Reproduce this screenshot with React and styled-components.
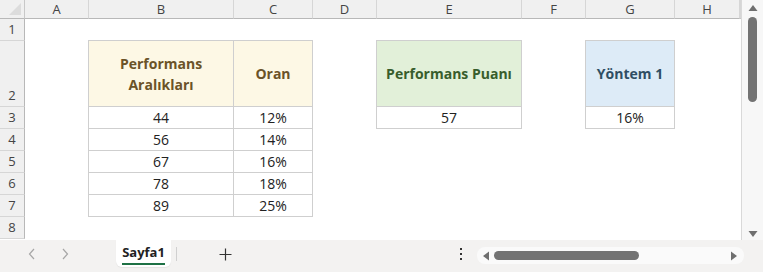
import React from 'react';
import styled, { createGlobalStyle } from 'styled-components';

const GlobalStyle = createGlobalStyle`
    html, body {
        margin: 0;
        padding: 0;
        background: #ffffff;
    }
    body {
        font-family: "Open Sans", "Liberation Sans", sans-serif;
    }
`;

const COLS = ['A', 'B', 'C', 'D', 'E', 'F', 'G', 'H'];
const ROW_HEIGHTS = [22, 66, 22, 22, 22, 22, 22, 22];

const tones = {
    cream: { bg: '#fdf8e5', color: '#6b5328' },
    green: { bg: '#e2f0d9', color: '#385d2c' },
    blue: { bg: '#ddebf7', color: '#2f4e63' },
};

// cells keyed by "col+row" (e.g. B2)
const cells = {
    B2: { text: 'Performans Aralıkları', tone: 'cream', wrap: true },
    C2: { text: 'Oran', tone: 'cream' },
    E2: { text: 'Performans Puanı', tone: 'green' },
    G2: { text: 'Yöntem 1', tone: 'blue' },
    B3: { text: '44' }, C3: { text: '12%' },
    B4: { text: '56' }, C4: { text: '14%' },
    B5: { text: '67' }, C5: { text: '16%' },
    B6: { text: '78' }, C6: { text: '18%' },
    B7: { text: '89' }, C7: { text: '25%' },
    E3: { text: '57' },
    G3: { text: '16%' },
};

const inTable = (col, row) => Boolean(cells[`${col}${row}`]);

export default function App() {
    return (
        <>
            <GlobalStyle />
            <Window>
                <Main>
                    <Sheet>
                        <Corner />
                        {COLS.map((c) => (
                            <ColHeader key={c}>{c}</ColHeader>
                        ))}
                        <ColHeader />
                        {ROW_HEIGHTS.map((h, i) => {
                            const row = i + 1;
                            return (
                                <React.Fragment key={row}>
                                    <RowHeader>{row}</RowHeader>
                                    {COLS.map((col, ci) => {
                                        const cell = cells[`${col}${row}`];
                                        if (!cell) return <Cell key={col} />;
                                        const tone = cell.tone ? tones[cell.tone] : null;
                                        return (
                                            <Cell
                                                key={col}
                                                $bordered
                                                $top={!inTable(col, row - 1)}
                                                $left={ci === 0 || !inTable(COLS[ci - 1], row)}
                                                $bg={tone ? tone.bg : '#ffffff'}
                                                $color={tone ? tone.color : '#222222'}
                                                $bold={Boolean(tone)}
                                            >
                                                {cell.wrap ? (
                                                    <span>Performans<br />Aralıkları</span>
                                                ) : (
                                                    cell.text
                                                )}
                                            </Cell>
                                        );
                                    })}
                                    <Cell />
                                </React.Fragment>
                            );
                        })}
                    </Sheet>
                    <VScroll>
                        <Arrow viewBox="0 0 10 8" width="10" height="8">
                            <path d="M5 1 L9.5 7 L0.5 7 Z" fill="#6f6f6f" />
                        </Arrow>
                        <VThumb />
                        <Spacer />
                        <Arrow viewBox="0 0 10 8" width="10" height="8">
                            <path d="M0.5 1 L9.5 1 L5 7 Z" fill="#6f6f6f" />
                        </Arrow>
                    </VScroll>
                </Main>
                <TabBar>
                    <NavButton>
                        <svg width="8" height="12" viewBox="0 0 8 12">
                            <path d="M6 1 L1.5 6 L6 11" fill="none" stroke="#a6a6a6" strokeWidth="1.2" />
                        </svg>
                    </NavButton>
                    <NavButton>
                        <svg width="8" height="12" viewBox="0 0 8 12">
                            <path d="M2 1 L6.5 6 L2 11" fill="none" stroke="#a6a6a6" strokeWidth="1.2" />
                        </svg>
                    </NavButton>
                    <Tab>
                        <TabLabel>Sayfa1</TabLabel>
                    </Tab>
                    <TabDivider />
                    <AddButton>
                        <svg width="13" height="13" viewBox="0 0 13 13">
                            <path d="M6.5 0.5 V12.5 M0.5 6.5 H12.5" stroke="#333" strokeWidth="1.2" />
                        </svg>
                    </AddButton>
                    <Grow />
                    <MoreDots>
                        <i /><i /><i />
                    </MoreDots>
                    <HScroll>
                        <svg width="8" height="10" viewBox="0 0 8 10">
                            <path d="M7 0.5 V9.5 L1 5 Z" fill="#6f6f6f" />
                        </svg>
                        <HThumb />
                        <Grow />
                        <svg width="8" height="10" viewBox="0 0 8 10">
                            <path d="M1 0.5 V9.5 L7 5 Z" fill="#6f6f6f" />
                        </svg>
                    </HScroll>
                </TabBar>
            </Window>
        </>
    );
}

const Window = styled.div`
    width: 763px;
    height: 272px;
    display: flex;
    flex-direction: column;
    overflow: hidden;
    background: #ffffff;
`;

const Main = styled.div`
    display: flex;
    height: 240px;
`;

const Sheet = styled.div`
    flex: 1;
    display: grid;
    grid-template-columns: 25px 64px 145px 79px 64px 145px 64px 89px 65px 1fr;
    grid-template-rows: 19px ${ROW_HEIGHTS.map((h) => `${h}px`).join(' ')};
    border-right: 1px solid #d9d9d9;
    align-content: start;
`;

const Corner = styled.div`
    background: #f0f0f0;
    border-right: 1px solid #c8c8c8;
    border-bottom: 1px solid #b8b8b8;
    position: relative;
    &::after {
        content: '';
        position: absolute;
        right: 3px;
        bottom: 3px;
        border-style: solid;
        border-width: 0 0 12px 12px;
        border-color: transparent transparent #dcdcdc transparent;
    }
`;

const ColHeader = styled.div`
    background: #f0f0f0;
    border-right: 1px solid #d6d6d6;
    border-bottom: 1px solid #b8b8b8;
    color: #444444;
    font-size: 13px;
    display: flex;
    align-items: center;
    justify-content: center;
    box-sizing: border-box;
    &:last-child {
        border-right: none;
    }
`;

const RowHeader = styled.div`
    background: #f0f0f0;
    border-right: 1px solid #b8b8b8;
    border-bottom: 1px solid #d6d6d6;
    color: #444444;
    font-size: 13px;
    display: flex;
    align-items: flex-end;
    justify-content: center;
    padding-bottom: 2px;
    box-sizing: border-box;
`;

const Cell = styled.div`
    box-sizing: border-box;
    background: ${(p) => p.$bg || '#ffffff'};
    color: ${(p) => p.$color || '#222222'};
    font-size: 14px;
    font-weight: ${(p) => (p.$bold ? 700 : 400)};
    line-height: 21px;
    display: flex;
    align-items: center;
    justify-content: center;
    text-align: center;
    border-right: ${(p) => (p.$bordered ? '1px solid #cfcfcf' : 'none')};
    border-bottom: ${(p) => (p.$bordered ? '1px solid #cfcfcf' : 'none')};
    border-top: ${(p) => (p.$bordered && p.$top ? '1px solid #cfcfcf' : 'none')};
    border-left: ${(p) => (p.$bordered && p.$left ? '1px solid #cfcfcf' : 'none')};
    margin-top: ${(p) => (p.$bordered && p.$top ? '-1px' : '0')};
    margin-left: ${(p) => (p.$bordered && p.$left ? '-1px' : '0')};
`;

const VScroll = styled.div`
    width: 21px;
    background: #f7f7f7;
    display: flex;
    flex-direction: column;
    align-items: center;
    padding: 4px 0 2px;
    box-sizing: border-box;
`;

const Arrow = styled.svg`
    flex: none;
`;

const VThumb = styled.div`
    width: 9px;
    height: 85px;
    margin-top: 5px;
    border-radius: 5px;
    background: #737373;
`;

const Spacer = styled.div`
    flex: 1;
`;

const TabBar = styled.div`
    flex: 1;
    display: flex;
    align-items: stretch;
    background: #f3f2f1;
    padding-left: 15px;
    padding-right: 19px;
`;

const NavButton = styled.div`
    width: 33px;
    display: flex;
    align-items: center;
    justify-content: center;
    padding-bottom: 4px;
`;

const Tab = styled.div`
    margin-left: 35px;
    width: 55px;
    margin-bottom: 5px;
    background: #ffffff;
    border-radius: 0 0 6px 6px;
    display: flex;
    justify-content: center;
    align-items: center;
    box-shadow: 0 1px 1px rgba(0, 0, 0, 0.06);
`;

const TabLabel = styled.span`
    font-size: 13px;
    font-weight: 700;
    color: #222222;
    padding-bottom: 1px;
    border-bottom: 2px solid #1e7145;
    line-height: 19px;
`;

const TabDivider = styled.div`
    width: 1px;
    margin: 7px 0 11px 5px;
    background: #d0d0d0;
`;

const AddButton = styled.div`
    margin-left: 42px;
    display: flex;
    align-items: center;
    padding-bottom: 4px;
`;

const Grow = styled.div`
    flex: 1;
`;

const MoreDots = styled.div`
    display: flex;
    flex-direction: column;
    justify-content: center;
    gap: 3px;
    padding-bottom: 4px;
    margin-right: 15px;
    i {
        width: 2px;
        height: 2px;
        background: #333;
    }
`;

const HScroll = styled.div`
    width: 267px;
    margin: 7px 0 8px;
    background: #fafafa;
    border-radius: 8px;
    display: flex;
    align-items: center;
    padding: 0 6px 0 5px;
    box-sizing: border-box;
    gap: 4px;
`;

const HThumb = styled.div`
    width: 145px;
    height: 9px;
    border-radius: 5px;
    background: #737373;
`;
